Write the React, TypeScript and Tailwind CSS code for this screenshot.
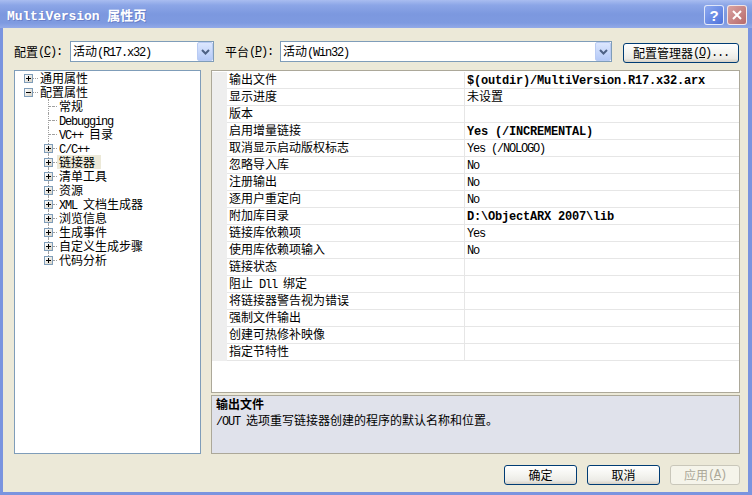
import React from "react";

// --- helpers ---
const mono = "font-['Liberation_Mono',monospace] tracking-[-1.2px] whitespace-pre";
const monoBold = "font-['Liberation_Mono',monospace] font-bold tracking-[-0.2px] whitespace-pre";

function M({ children, b }: { children: React.ReactNode; b?: boolean }) {
  return <span className={b ? monoBold : mono}>{children}</span>;
}

function Box({ open }: { open?: boolean }) {
  return (
    <div className="w-[9px] h-[9px] shrink-0 border border-[#7F9DB9] bg-[linear-gradient(135deg,#ffffff,#d6d2c6)] flex flex-col items-center justify-center">
      <div className={`w-px h-[2px] ${open ? "" : "bg-black"}`} />
      <div className="w-[5px] h-px bg-black" />
      <div className={`w-px h-[2px] ${open ? "" : "bg-black"}`} />
    </div>
  );
}

function Combo({ width, children }: { width: string; children: React.ReactNode }) {
  return (
    <div className={`${width} h-[21px] border border-[#7F9DB9] bg-white flex items-center`}>
      <span className="pl-[2px] leading-[12px]">{children}</span>
      <div className="ml-auto w-[16px] h-full rounded-[2px] border border-[#B9CBF3] bg-[linear-gradient(to_bottom,#DCE7FE,#B4C9F7)] flex items-center justify-center">
        <svg width="9" height="6" viewBox="0 0 9 6">
          <path d="M1 1 L4.5 4.5 L8 1" stroke="#4D6185" strokeWidth="2" fill="none" />
        </svg>
      </div>
    </div>
  );
}

function XPButton({ children, disabled, width }: { children: React.ReactNode; disabled?: boolean; width: string }) {
  return (
    <div
      className={`${width} h-[20px] rounded-[3px] border flex items-center justify-center leading-[12px] ${
        disabled
          ? "border-[#C9C7BA] text-[#ACA899] bg-[#F5F4EA]"
          : "border-[#003C74] bg-[linear-gradient(to_bottom,#FFFFFF,#F5F5F1_45%,#ECEBE6_80%,#D6D0C5)]"
      }`}
    >
      {children}
    </div>
  );
}

// --- data ---
interface TreeItem {
  label: React.ReactNode;
  leaf?: boolean;
  selected?: boolean;
}

const children: TreeItem[] = [
  { label: "常规", leaf: true },
  { label: <M>Debugging</M>, leaf: true },
  { label: <><M>VC++ </M>目录</>, leaf: true },
  { label: <M>C/C++</M> },
  { label: "链接器", selected: true },
  { label: "清单工具" },
  { label: "资源" },
  { label: <><M>XML </M>文档生成器</> },
  { label: "浏览信息" },
  { label: "生成事件" },
  { label: "自定义生成步骤" },
  { label: "代码分析" },
];

const rows: [React.ReactNode, React.ReactNode][] = [
  ["输出文件", <M b>$(outdir)/MultiVersion.R17.x32.arx</M>],
  ["显示进度", "未设置"],
  ["版本", ""],
  ["启用增量链接", <M b>Yes (/INCREMENTAL)</M>],
  ["取消显示启动版权标志", <M>Yes (/NOLOGO)</M>],
  ["忽略导入库", <M>No</M>],
  ["注册输出", <M>No</M>],
  ["逐用户重定向", <M>No</M>],
  ["附加库目录", <M b>{"D:\\ObjectARX 2007\\lib"}</M>],
  ["链接库依赖项", <M>Yes</M>],
  ["使用库依赖项输入", <M>No</M>],
  ["链接状态", ""],
  [<>阻止<M>{" Dll "}</M>绑定</>, ""],
  ["将链接器警告视为错误", ""],
  ["强制文件输出", ""],
  ["创建可热修补映像", ""],
  ["指定节特性", ""],
];

const dot = "border-dotted border-[#A0A0A0]";

export default function App() {
  return (
    <div className="w-[752px] h-[495px] bg-[#7A94DF] flex flex-col text-[12px] text-black font-['Noto_Sans_CJK_SC',sans-serif] overflow-hidden">
      {/* Title bar */}
      <div className="h-[28px] shrink-0 flex items-start bg-[linear-gradient(to_bottom,#A9BDF0_0%,#8CA6E7_18%,#7C98DF_50%,#7E9AE0_82%,#93AAE8_100%)]">
        <div className="pl-[7px] pt-[6px] text-white font-bold text-[13px] leading-[18px] [text-shadow:1px_1px_0_#6A80C8]">
          <span className="font-['Liberation_Mono',monospace] tracking-[-0.1px]">MultiVersion </span>属性页
        </div>
        <div className="ml-auto mt-[5px] w-[20px] h-[20px] rounded-[3px] border border-white/80 bg-[linear-gradient(135deg,#8DA9F0,#4D72DB)] flex items-center justify-center text-white font-bold text-[15px] leading-none font-['Liberation_Sans',sans-serif]">
          ?
        </div>
        <div className="ml-[3px] mr-[5px] mt-[5px] w-[20px] h-[20px] rounded-[3px] border border-white/80 bg-[linear-gradient(135deg,#D9A3A2,#B76A6B)] flex items-center justify-center">
          <svg width="10" height="10" viewBox="0 0 10 10">
            <path d="M1 1 L9 9 M9 1 L1 9" stroke="white" strokeWidth="2" />
          </svg>
        </div>
      </div>

      {/* Body */}
      <div className="flex-1 ml-[3px] mr-[4px] mb-[3px] bg-[#ECE9D8] flex flex-col">
        {/* Config row */}
        <div className="mt-[13px] pl-[11px] flex items-start h-[23px]">
          <div className="w-[56px] h-[21px] flex items-center leading-[12px]">
            配置<M>(<u>C</u>):</M>
          </div>
          <Combo width="w-[144px]">
            活动<M>(R17.x32)</M>
          </Combo>
          <div className="ml-[11px] w-[55px] h-[21px] flex items-center leading-[12px]">
            平台<M>(<u>P</u>):</M>
          </div>
          <Combo width="w-[332px]">
            活动<M>(Win32)</M>
          </Combo>
          <div className="ml-[11px] mt-[2px]">
            <XPButton width="w-[116px]">
              配置管理器<M>(<u>O</u>)...</M>
            </XPButton>
          </div>
        </div>

        {/* Main */}
        <div className="mt-[6px] flex h-[384px]">
          {/* Tree */}
          <div className="ml-[11px] w-[187px] h-full border border-[#7F9DB9] bg-white leading-[14px]">
            <div className="h-[14px] flex items-center pl-[9px]">
              <Box />
              <div className={`w-[5px] border-t ${dot}`} />
              <span className="ml-[2px]">通用属性</span>
            </div>
            <div className="h-[14px] flex items-center pl-[9px]">
              <Box open />
              <div className={`w-[5px] border-t ${dot}`} />
              <span className="ml-[2px]">配置属性</span>
            </div>
            {children.map((c, i) => {
              const last = i === children.length - 1;
              return (
                <div key={i} className="h-[14px] flex pl-[29px]">
                  {c.leaf ? (
                    <div className="w-[9px] flex shrink-0">
                      <div className="w-[4px]" />
                      <div className={`border-l ${dot}`} />
                      <div className={`w-[4px] self-center border-t ${dot}`} />
                    </div>
                  ) : (
                    <div className="w-[9px] flex flex-col items-center shrink-0">
                      <div className={`flex-1 border-l ${dot}`} />
                      <Box />
                      <div className={`flex-1 ${last ? "" : `border-l ${dot}`}`} />
                    </div>
                  )}
                  <div className={`w-[4px] self-center border-t ${dot}`} />
                  <span className={`px-[2px] h-[14px] ${c.selected ? "bg-[#ECE9D8] pr-[6px]" : ""}`}>{c.label}</span>
                </div>
              );
            })}
          </div>

          {/* Property grid + description */}
          <div className="ml-[10px] w-[529px] h-full flex flex-col">
            <div className="h-[323px] border border-[#ACA899] bg-white pt-[1px]">
              {rows.map(([name, value], i) => (
                <div key={i} className="flex h-[17px] leading-[12px]">
                  <div className="w-[15px] bg-[#EEEEEE]" />
                  <div className="w-[238px] border-b border-r border-[#E6E6E6] pl-[2px] pt-[1px]">{name}</div>
                  <div className="flex-1 border-b border-[#E6E6E6] pl-[2px] pt-[1px]">{value}</div>
                </div>
              ))}
            </div>
            <div className="h-[2px]" />
            <div className="h-[59px] border border-[#ACA899] bg-[#E0E2EB] pl-[4px] leading-[16px]">
              <div className="font-bold">输出文件</div>
              <div>
                <M>/OUT </M>选项重写链接器创建的程序的默认名称和位置。
              </div>
            </div>
          </div>
        </div>

        {/* Buttons */}
        <div className="mt-[11px] flex justify-end pr-[8px]">
          <XPButton width="w-[73px]">确定</XPButton>
          <div className="w-[10px]" />
          <XPButton width="w-[73px]">取消</XPButton>
          <div className="w-[10px]" />
          <XPButton width="w-[70px]" disabled>
            应用<M>(<u>A</u>)</M>
          </XPButton>
        </div>
      </div>
    </div>
  );
}
